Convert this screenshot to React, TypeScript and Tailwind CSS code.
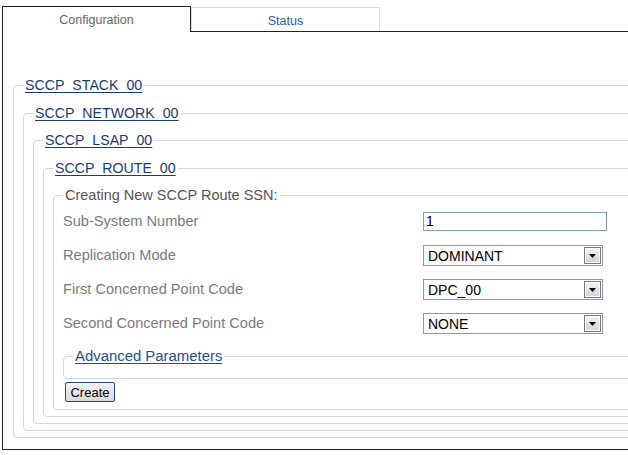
import React from 'react';

const FONT = { fontFamily: '"Liberation Sans", Arial, sans-serif' };

const Legend: React.FC<{ children: React.ReactNode }> = ({ children }) => (
  <legend className="px-[2px] text-[14.2px] leading-[18px] text-[#1c3c6e] underline underline-offset-[2px]">
    {children}
  </legend>
);

const Arrow = () => (
  <div className="w-[17px] h-[17px] border border-[#7a7a7a] bg-gradient-to-b from-[#f4f4f4] to-[#d4d4d4] flex items-center justify-center shadow-[inset_0_0_0_1px_#fff]">
    <svg width="7" height="4" viewBox="0 0 7 4">
      <path d="M0 0h7L3.5 4z" fill="#000" />
    </svg>
  </div>
);

const SelectBox: React.FC<{ value: string }> = ({ value }) => (
  <div className="w-[180px] h-[21px] border border-[#7f9db9] bg-white flex items-center justify-between pl-[4px] pr-[1px]">
    <span className="text-[14px] text-black leading-none">{value}</span>
    <Arrow />
  </div>
);

const ROWS: { label: string; kind: 'input' | 'select'; value: string }[] = [
  { label: 'Sub-System Number', kind: 'input', value: '1' },
  { label: 'Replication Mode', kind: 'select', value: 'DOMINANT' },
  { label: 'First Concerned Point Code', kind: 'select', value: 'DPC_00' },
  { label: 'Second Concerned Point Code', kind: 'select', value: 'NONE' },
];

export default function App() {
  return (
    <div className="w-[628px] h-[455px] overflow-hidden bg-white" style={FONT}>
      <div className="w-[720px]">
        {/* tabs */}
        <div className="flex h-[26px] mt-[6px] ml-[2px]">
          <div className="w-[189px] h-[26px] border border-b-0 border-[#222] flex justify-center pt-[4px] text-[12.5px] text-[#666]">
            Configuration
          </div>
          <div className="flex-1 flex items-end border-b border-[#222]">
            <div className="w-[189px] h-[24px] border border-b-0 border-[#ddd] flex justify-center pt-[4px] text-[12.5px] text-[#1f5f9f]">
              Status
            </div>
          </div>
        </div>

        {/* panel */}
        <div className="ml-[2px] h-[418px] border-l border-b border-[#222] pt-[44px] pl-[10px]">
          <fieldset className="border border-[#cfd8e2] rounded-[4px] pl-[9px] pt-[10px] pb-[6px]">
            <Legend>SCCP_STACK_00</Legend>
            <fieldset className="border border-[#cfd8e2] rounded-[4px] pl-[9px] pt-[9px] pb-[6px]">
              <Legend>SCCP_NETWORK_00</Legend>
              <fieldset className="border border-[#cfd8e2] rounded-[4px] pl-[9px] pt-[10px] pb-[6px]">
                <Legend>SCCP_LSAP_00</Legend>
                <fieldset className="border border-[#cfd8e2] rounded-[4px] pl-[9px] pt-[9px] pb-[6px]">
                  <Legend>SCCP_ROUTE_00</Legend>
                  <fieldset className="border border-[#cfd8e2] rounded-[4px] pl-[9px] pb-[5px]">
                    <legend className="px-[2px] text-[14.5px] leading-[18px] text-[#555]">
                      Creating New SCCP Route SSN:
                    </legend>
                    {ROWS.map((r) => (
                      <div key={r.label} className="flex items-center h-[34px] pt-[1px]">
                        <div className="w-[360px] text-[14.6px] text-[#7b7b7b]">{r.label}</div>
                        {r.kind === 'input' ? (
                          <div className="w-[184px] h-[19px] border border-[#7f9db9] bg-white flex items-center pl-[2px] text-[14px] text-black">
                            {r.value}
                          </div>
                        ) : (
                          <SelectBox value={r.value} />
                        )}
                      </div>
                    ))}
                    <fieldset className="mt-[7px] border border-[#cfd8e2] rounded-[4px] pl-[9px] h-[32px]">
                      <legend className="px-[2px] text-[14.9px] leading-[18px] text-[#24508c] underline underline-offset-[2px]">
                        Advanced Parameters
                      </legend>
                    </fieldset>
                    <button className="mt-[3px] ml-[2px] w-[50px] h-[20px] border border-[#1e4d78] rounded-[2px] bg-gradient-to-b from-[#f3f3f3] to-[#dadada] text-[13px] text-black leading-none">
                      Create
                    </button>
                  </fieldset>
                </fieldset>
              </fieldset>
            </fieldset>
          </fieldset>
        </div>
      </div>
    </div>
  );
}
